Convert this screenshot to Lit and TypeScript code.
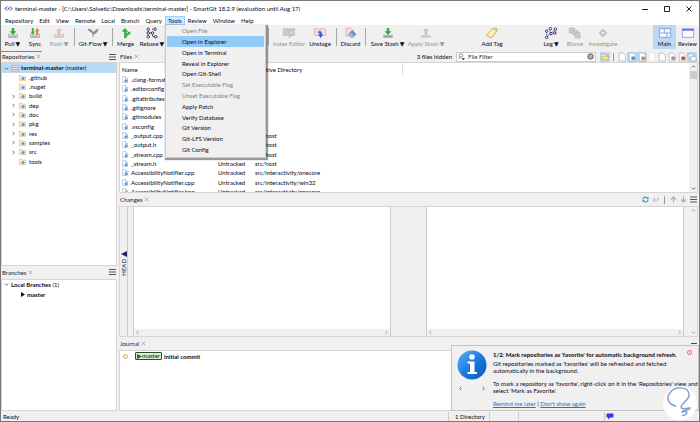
import { LitElement, html, css, svg, nothing } from "lit";
import { customElement } from "lit/decorators.js";

const chevron = (d: string) => html`<svg class="chev" viewBox="0 0 6 6"><path d=${d} /></svg>`;
const UP = "M1 4 L3 2 L5 4";
const DOWN = "M1 2 L3 4 L5 2";
const LEFT = "M4 1 L2 3 L4 5";
const RIGHT = "M2 1 L4 3 L2 5";

const tray = (c: string) => svg`<path d="M1 9v6h14V9" fill="#dcdcdc" stroke=${c} stroke-width="1.2"/><path d="M3 13h10" stroke=${c} stroke-width="1.2"/>`;
const downArrow = svg`<path d="M6 0h4v5h3.500L8 11 2.500 5H6z" fill="#2fae3c"/>`;
const upArrow = (c: string) => svg`<path d="M6 11h4V5h3L8 0 3 5h3z" fill=${c}/>`;

const toolIcons: Record<string, unknown> = {
  pull: svg`${tray("#9a9a9a")}${downArrow}`,
  sync: svg`${tray("#9a9a9a")}<path d="M3 0h3v6h2L4.500 11 1 6h2z" fill="#3bb143"/><path d="M10 11h3V5h2L11.500 0 8 5h2z" fill="#e07b39"/>`,
  push: svg`${tray("#bdbdbd")}${upArrow("#d8bfb3")}`,
  flow: svg`<path d="M8 15V9M8 9C7 7 4 7 0 2c5 0 8 2 8 7zM8 10c1-4 3-6 8-8-1 5-4 7-8 8z" fill="#8d9a91" stroke="#68756d" stroke-width="1"/>`,
  merge: svg`<path d="M6 0l6 6H9v3l3-3h3v3l-6 4v3H5V6H1z" fill="#35b24a"/>`,
  rebase: svg`<g fill="#fff" stroke="#26264f" stroke-width="1.500"><path d="M2 2v12M2 8h7M8 2h5M9 8v6h5" fill="none" stroke-dasharray="2 1"/><circle cx="2" cy="2" r="2"/><circle cx="2" cy="8" r="2"/><circle cx="2" cy="14" r="2"/><circle cx="13" cy="2" r="2"/><circle cx="9" cy="8" r="2"/><circle cx="14" cy="14" r="2"/></g>`,
  index: svg`<path d="M-1 1h7l2 1 2-1h7v11H-1z" fill="#d4d4d4" stroke="#b0b0b0"/><path d="M1 4h5M1 8h4M10 4h5M8 2v9" stroke="#a4a4a4"/><path d="M7 15l6-7 2 1-6 7z" fill="#bcbcbc"/>`,
  unstage: svg`<path d="M-1 1h6l2 2v9h-8z" fill="#f8dcd6" stroke="#c9a49d"/><path d="M9 1h6l2 2v9H9z" fill="#f8dcd6" stroke="#c9a49d"/><path d="M5 6c3-2 6 0 6 4h2l-4 6-4-6h3c0-2-1-2-3-2z" fill="#3558e0"/>`,
  discard: svg`<path d="M0 0h8l4 4v9H0z" fill="#f7dcda" stroke="#cfa3a0"/><path d="M4 10l6-6 6 6-6 6z" fill="#6f90cb" stroke="#4d6da8"/><path d="M4 10l3-3 6 6-3 3z" fill="#a4bae2"/>`,
  save: svg`<path d="M0 11h16v5H0z" fill="#b9b9b9"/><path d="M2 13.500h12" stroke="#888"/>${downArrow}`,
  apply: svg`<path d="M0 11h16v5H0z" fill="#d6d6d6"/><path d="M2 13.500h12" stroke="#bbb"/><path d="M6 12h4V5h3L8 0 3 5h3z" fill="#d6c0ac"/>`,
  tag: svg`<path d="M-1 12L8 1l7-1 1 5-9 11z" fill="#fdeeb0" stroke="#b59c57" stroke-width="1.200"/><circle cx="13" cy="3.500" r="1.100" fill="#fff" stroke="#8a7742" stroke-width=".6"/>`,
  log: svg`<g fill="#fff" stroke="#26264f" stroke-width="1.500"><path d="M1 4v10M1 14l6-5 7-6M6 1l1 8" fill="none" stroke="#3a46e0" stroke-dasharray="2 1"/><circle cx="1" cy="5" r="2"/><circle cx="1" cy="15" r="2"/><circle cx="7" cy="1" r="2"/><circle cx="8" cy="9" r="2"/><circle cx="15" cy="2" r="2"/><circle cx="14" cy="8" r="2"/></g>`,
  blame: svg`<g fill="#cccccc" stroke="#b0b0b0"><path d="M-1 0h8v8h-8z"/><path d="M4 4h8v7H4z"/><path d="M8 7h8v9H8z"/></g>`,
  investigate: svg`<path d="M8 2l6 6-6 6-6-6z" fill="#c0c0c0" stroke="#a4a4a4"/><path d="M8 5l3 3-3 3-3-3z" fill="#eee"/>`,
  main: svg`<g fill="#f6faff" stroke="#7d92dd" stroke-width="1.300"><path d="M-1 1h18v14H-1zM-1 8h18M7 1v7M11 8v7"/></g>`,
  review: svg`<path d="M-1 1h18v14H-1z" fill="#fafbff" stroke="#8f99df" stroke-width="1.300"/><path d="M-1 3h18" stroke="#5966d4" stroke-width="2.500"/>`,
};

interface Tool { icon: string; label: string; menu?: boolean; off?: boolean; active?: boolean }
const tools: (Tool | "sep" | "gap")[] = [
  { icon: "pull", label: "Pull", menu: true },
  { icon: "sync", label: "Sync" },
  { icon: "push", label: "Push", menu: true, off: true },
  "sep",
  { icon: "flow", label: "Git-Flow", menu: true },
  "sep",
  { icon: "merge", label: "Merge" },
  { icon: "rebase", label: "Rebase", menu: true },
  "gap",
  "sep",
  { icon: "index", label: "Index Editor", off: true },
  { icon: "unstage", label: "Unstage" },
  "sep",
  { icon: "discard", label: "Discard" },
  "sep",
  { icon: "save", label: "Save Stash", menu: true },
  { icon: "apply", label: "Apply Stash", menu: true, off: true },
  "gap",
  { icon: "tag", label: "Add Tag" },
  "gap",
  { icon: "log", label: "Log", menu: true },
  { icon: "blame", label: "Blame", off: true },
  { icon: "investigate", label: "Investigate", off: true },
  "gap",
  { icon: "main", label: "Main", active: true },
  { icon: "review", label: "Review" },
];

const menus = ["Repository", "Edit", "View", "Remote", "Local", "Branch", "Query", "Tools", "Review", "Window", "Help"];

const toolsMenu: [string, boolean][] = [
  ["Open File", false],
  ["Open in Explorer", true],
  ["Open in Terminal", true],
  ["Reveal in Explorer", true],
  ["Open Git-Shell", true],
  ["Set Executable Flag", false],
  ["Unset Executable Flag", false],
  ["Apply Patch", true],
  ["Verify Database", true],
  ["Git Version", true],
  ["Git-LFS Version", true],
  ["Git Config", true],
];

const folders: [string, boolean][] = [
  [".github", false], [".nuget", false], ["build", true], ["dep", true], ["doc", true],
  ["pkg", true], ["res", true], ["samples", true], ["src", true], ["tools", false],
];

const files: [string, string][] = [
  [".clang-format", ""],
  [".editorconfig", ""],
  [".gitattributes", ""],
  [".gitignore", ""],
  [".gitmodules", ""],
  [".vsconfig", ""],
  ["_output.cpp", "src/host"],
  ["_output.h", "src/host"],
  ["_stream.cpp", "src/host"],
  ["_stream.h", "src/host"],
  ["AccessibilityNotifier.cpp", "src/interactivity/onecore"],
  ["AccessibilityNotifier.cpp", "src/interactivity/win32"],
  ["AccessibilityNotifier.hpp", "src/interactivity/onecore"],
];

const fileIcon = html`<svg class="ficon" viewBox="0 0 12 14"><path d="M1 1h6l4 4v8H1z" fill="#fff" stroke="#8fa3b8"/><path d="M7 1v4h4" fill="none" stroke="#8fa3b8"/><circle cx="8" cy="9.500" r="3.200" fill="#5b9be6"/></svg>`;
const folderIcon = html`<svg class="dicon" viewBox="0 0 14 12"><path d="M1 11.500V.5h5l1.500 2H13v9z" fill="#fdebd0" stroke="#e2a95f"/><circle cx="8" cy="7" r="3.200" fill="#5b9be6"/></svg>`;
const repoIcon = html`<svg class="ricon" viewBox="0 0 16 14"><path d="M1 1h14v12H1z" fill="#f4dede" stroke="#b98f98"/><path d="M1 5h14M1 9h14" stroke="#b98f98" stroke-width="1.500"/></svg>`;
const burger = html`<svg class="burger" viewBox="0 0 7 6"><path d="M0 0h7v1H0zM0 2.500h7v1H0zM0 5h7v1H0z" fill="#555"/></svg>`;

const filters: [string, string, boolean][] = [
  ["Unchanged", "", false],
  ["Untracked", "#4d94ec", true],
  ["Ignored", "#d28b4b", true],
  ["Assume unchanged", "faint", false],
  ["Directories", "", false],
  ["Renamed", "#999999", false],
  ["Conflicting", "#c8522e", false],
  ["Subdirectories", "stack", true],
];

const filterIcon = (kind: string) =>
  kind === "stack"
    ? svg`<path d="M0 1h8l2 2v6H0z" fill="#e8eef5" stroke="#8b9db0"/><path d="M5 6h7l2 2v6H5z" fill="#fff" stroke="#8b9db0"/>`
    : svg`<path d="M2 0h7l4 4v10H2z" fill="#fff" stroke=${kind === "faint" ? "#dcdcdc" : "#90a0b2"}/>${kind.startsWith("#") ? svg`<circle cx="9" cy="9" r="3.500" fill=${kind}/>` : nothing}`;

@customElement("app-root")
export class AppRoot extends LitElement {
  static styles = css`
    :host { display: block; }
    * { box-sizing: border-box; }
    button, input { font: inherit; color: inherit; margin: 0; padding: 0; border: 0; background: none; }
    svg { display: block; flex: none; overflow: visible; }
    .window {
      display: flex; flex-direction: column; height: 100vh; overflow: hidden; position: relative;
      background: #f0f0f0; color: #08081a; border: 1px solid #777;
      font: 6px/9px Lato, "Open Sans", sans-serif; white-space: nowrap;
    }
    .window * { font-variant-ligatures: none; }
    .title { display: flex; align-items: center; height: 15px; flex: none; background: #fff; padding-left: 4px; gap: 3px; }
    .title h1 { flex: 1; font: inherit; margin: 0; }
    .winbtn { width: 19px; height: 14px; display: grid; place-items: center; }
    .winbtn svg { width: 6px; height: 6px; fill: none; stroke: #222; stroke-width: 1; }
    .title .winbtn:last-child { width: 20px; }
    .logo { width: 7px; height: 7px; }
    .menubar { display: flex; background: #fff; height: 9px; flex: none; padding-left: 1px; }
    .menubar button { padding: 0 3px; line-height: 9px; }
    .menubar .open { background: #cce8ff; outline: 1px solid #99d1ff; outline-offset: -1px; }
    .menuwrap { position: relative; }
    .menu {
      position: absolute; z-index: 5; left: 0; top: 9px; width: 101px; padding: 0 1px 2px;
      display: flex; flex-direction: column; background: #f0f0f0; border: 1px solid #ccc; border-top-width: 0; box-shadow: 1px 1px 1px 1px #0006;
    }
    .menubar .menu button { height: 11px; line-height: 11px; padding-left: 15px; text-align: left; }
    .menubar .menu button:nth-child(5n) { height: 10px; line-height: 10px; }
    .menubar .menu button:disabled { color: #848484; }
    .menubar .menu .hot { background: #91c9f7; }
    .tools {
      display: grid; height: 25px; flex: none;
      grid-template-columns: 23px 22px 26px 4px 34px 5px 21px 32px 97px 6px 36px 26px 7px 21px 8px 37px 40px 1fr 26px 1fr 26px 22px 34px 1fr 23px 23px;
    }
    .tool { display: flex; flex-direction: column; align-items: center; justify-content: flex-start; padding-top: 3px; gap: 1px; line-height: 9px; }
    .tool svg { width: 10px; height: 10px; }
    .tool span { display: flex; gap: 1px; }
    .tool i { font: 6px/9px "DejaVu Sans", sans-serif; }
    .tool:disabled { color: #949494; }
    .tool.active { background: #b9d9f2; height: 24px; }
    .vsep { width: 1px; height: 18px; margin-top: 3px; background: #a8a8a8; justify-self: center; }
    .body { flex: 1; min-height: 0; display: grid; grid-template-columns: 116px 1fr; gap: 2px; padding: 1px 1px 0 0; }
    .col { display: flex; flex-direction: column; min-width: 0; min-height: 0; }
    .head { position: relative; display: flex; align-items: center; height: 13px; flex: none; padding: 0 1px; }
    .head h2 { font: inherit; margin: 0; color: #22222d; }
    .close { width: 6px; display: grid; place-items: center; }
    .tab { flex: 1; display: flex; gap: 1px; }
    .head.first { height: 11px; }
    .focus::before { content: ""; position: absolute; left: 0; top: 0; width: 41px; height: 1px; background: #4a90d9; }
    .burger { width: 7px; height: 6px; }
    .box { background: #fff; border: 1px solid #d5d5d5; min-height: 0; overflow: hidden; flex-basis: 0; }
    .g204 { flex-grow: 204; }
    .g132 { flex-grow: 132; }
    .g60 { flex-grow: 60; }
    ul { list-style: none; margin: 0; padding: 0; }
    li { height: 9px; line-height: 9px; display: flex; align-items: center; gap: 3px; padding-left: 9px; }
    li:nth-child(3n + 1) { height: 10px; line-height: 10px; }
    .top { padding-left: 2px; gap: 2px; }
    .sel { background: #b8dcf5; }
    .ricon { width: 8px; height: 7px; }
    .twist { width: 5px; height: 6px; display: grid; place-items: center; }
    .chev { width: 5px; height: 5px; fill: none; stroke: #555; stroke-width: 1; }
    .dicon { width: 7px; height: 6px; }
    .ficon { width: 6px; height: 7px; }
    .branch { padding-left: 18px; font-weight: 700; gap: 2px; }
    .play { width: 5px; height: 5px; }
    .search { display: flex; align-items: center; width: 140px; height: 10px; background: #fff; border: 1px solid #ccc; padding: 0 1px; gap: 3px; margin: 0 4px; }
    .search input { flex: 1; min-width: 0; height: 8px; line-height: 8px; outline: 0; }
    .search input::placeholder { color: #333; opacity: 1; }
    .mag, .clear { width: 7px; height: 7px; }
    .filters { display: flex; align-items: center; }
    .filters button { width: 10px; height: 10px; display: grid; place-items: center; }
    .filters button svg { width: 8px; height: 8px; }
    .filters .on { background: #b9d9f2; }
    .bar { width: 1px; height: 8px; background: #999; margin: 0 3px; }
    .scrollpane { display: flex; }
    .grow { flex: 1; min-width: 0; overflow: hidden; }
    .vscroll { width: 8px; background: #f0f0f0; display: flex; flex-direction: column; justify-content: space-between; align-items: center; padding: 1px 0; }
    .thumb { width: 7px; height: 8px; background: #cdcdcd; margin-bottom: auto; margin-top: 2px; }
    table { border-collapse: collapse; table-layout: fixed; width: 100%; }
    td, th { padding: 0; font-weight: 400; text-align: left; overflow: hidden; }
    th { height: 12px; padding-left: 2px; }
    th:nth-child(3) { border-right: 1px solid #ddd; }
    th:nth-child(2), td:nth-child(2), th:nth-child(3), td:nth-child(3) { padding-left: 1px; }
    .cn { width: 97px; }
    .cs { width: 37px; }
    .cd { width: 148px; }
    tbody tr { height: 9px; }
    tbody tr:nth-child(3n) { height: 10px; }
    .name { display: flex; align-items: center; gap: 3px; padding-left: 2px; height: 9px; line-height: 9px; }
    .ops { display: flex; align-items: center; gap: 3px; }
    .ops svg { width: 7px; height: 7px; }
    .ops .bar { margin: 0 2px; }
    .diff { display: grid; grid-template-columns: 8px 5px 1fr 35px 1fr 5px 8px; background: #f0f0f0; }
    .side { display: flex; flex-direction: column; align-items: center; border-right: 1px solid #ccc; padding-top: 44px; gap: 2px; }
    .side span { writing-mode: vertical-rl; transform: rotate(180deg); line-height: 7px; }
    .side svg { width: 6px; height: 6px; }
    .pane { background: #fff; border: solid #ccc; border-width: 0 1px; display: flex; flex-direction: column; justify-content: flex-end; min-width: 0; }
    .hscroll { height: 7px; background: #f0f0f0; display: flex; justify-content: space-between; align-items: center; padding: 0 1px; }
    .dim .chev, .chev.dim { stroke: #999; }
    .commit { display: flex; align-items: center; height: 10px; padding: 0 3px; gap: 7px; }
    .commit svg { width: 5px; height: 5px; }
    .msg { display: flex; gap: 2px; align-items: center; }
    .ref { display: flex; align-items: center; height: 8px; line-height: 6px; padding: 0 1px; border: 1px solid #2e4d2e; border-radius: 1px; background: #d6f5cc; }
    .status { display: flex; align-items: center; height: 10px; flex: none; }
    .status span { padding-left: 2px; flex: 1; }
    .cell { height: 9px; border-left: 1px solid #ccc; display: flex; align-items: center; padding-left: 6px; }
    .c1 { width: 41px; }
    .c2 { width: 29px; }
    .c3 { width: 86px; }
    .c4 { width: 95px; padding-left: 1px; }
    .cell svg { width: 8px; height: 7px; }
    .toast {
      position: absolute; z-index: 4; right: 0; bottom: 10px; width: 248px; height: 66px; padding: 4px 5px;
      display: grid; grid-template-columns: 30px 1fr 6px; column-gap: 6px; background: #f0f0f0; border: 1px solid #c4c4c4;
    }
    .info { width: 30px; height: 30px; }
    .pager { display: flex; justify-content: space-between; padding: 6px 1px; }
    .note { min-width: 0; line-height: 7px; }
    .note h3 { font-size: 6px; line-height: 9px; margin: 0 0 1px; }
    .note p { margin: 0 0 6px; }
    .note a { color: #2472c8; }
    .x { width: 5px; height: 5px; }
    .bulb { position: absolute; z-index: 6; right: 2px; bottom: 1px; width: 34px; height: 34px; }
    .min { position: absolute; z-index: 6; right: 2px; bottom: 77px; width: 6px; height: 1px; background: #444; }
  `;

  private head(title: string, extra: unknown = nothing, cls = "") {
    return html`<header class="head ${cls}"><div class="tab"><h2>${title}</h2><button class="close" aria-label="Close ${title}"><svg viewBox="0 0 6 6" class="chev dim"><path d="M1 1l4 4M5 1l-4 4"/></svg></button></div>${extra}</header>`;
  }

  private tool(t: Tool | "sep" | "gap") {
    if (t === "gap") return html`<div></div>`;
    if (t === "sep") return html`<div class="vsep"></div>`;
    return html`<button class="tool ${t.active ? "active" : ""}" ?disabled=${t.off}>
      <svg viewBox="0 0 16 16">${toolIcons[t.icon]}</svg><span>${t.label}${t.menu ? html`<i>▼</i>` : nothing}</span>
    </button>`;
  }

  render() {
    return html`<div class="window">
      <header class="title">
        <svg class="logo" viewBox="0 0 14 14"><path d="M4 3L0 7l4 4M10 3l4 4-4 4" fill="none" stroke="#2b2b7a" stroke-width="2"/><circle cx="7" cy="7" r="2" fill="#3b55c4"/></svg>
        <h1>terminal-master - [C:\\Users\\Solvetic\\Downloads\\terminal-master] - SmartGit 18.2.9 (evaluation until Aug 17)</h1>
        <button class="winbtn" aria-label="Minimize"><svg viewBox="0 0 6 6"><path d="M0 3.500h6"/></svg></button>
        <button class="winbtn" aria-label="Maximize"><svg viewBox="0 0 6 6"><path d="M.5.5h5v5h-5z"/></svg></button>
        <button class="winbtn" aria-label="Close"><svg viewBox="0 0 6 6"><path d="M.5.5l5 5M5.500.5l-5 5"/></svg></button>
      </header>
      <nav class="menubar">
        ${menus.map((m) => m === "Tools"
          ? html`<div class="menuwrap"><button class="open">${m}</button><div class="menu">
              ${toolsMenu.map(([label, on]) => html`<button class=${label === "Open in Explorer" ? "hot" : ""} ?disabled=${!on}>${label}</button>`)}
            </div></div>`
          : html`<button>${m}</button>`)}
      </nav>
      <div class="tools">${tools.map((t) => this.tool(t))}</div>
      <main class="body">
        <section class="col">
          ${this.head("Repositories", burger, "first focus")}
          <div class="box g204">
            <ul>
              <li class="top sel">${chevron(DOWN)}${repoIcon}<span><b>terminal-master</b> (master)</span></li>
              ${folders.map(([n, open]) => html`<li><span class="twist">${open ? chevron(RIGHT) : nothing}</span>${folderIcon}<span>${n}</span></li>`)}
            </ul>
          </div>
          ${this.head("Branches", burger)}
          <div class="box g132">
            <ul><li class="top">${chevron(DOWN)}<span><b>Local Branches</b> (1)</span></li>
            <li class="branch"><svg class="play" viewBox="0 0 5 5"><path d="M1 0l4 2.500-4 2.500z" fill="#101030"/></svg>master</li></ul>
          </div>
        </section>
        <section class="col">
          ${this.head("Files", html`
            <span>3 files hidden</span>
            <label class="search"><svg class="mag" viewBox="0 0 14 14"><circle cx="6" cy="5" r="3.500" fill="#fff" stroke="#555" stroke-width="1.300"/><path d="M4 8l-3 4M8 11h5l-2.500 3z" stroke="#334" fill="#334"/></svg><input placeholder="File Filter" aria-label="File Filter"><svg class="clear" viewBox="0 0 14 14"><circle cx="7" cy="7" r="6.500" fill="#888"/><path d="M4.500 4.500l5 5M9.500 4.500l-5 5" stroke="#fff" stroke-width="1.500"/></svg></label>
            <div class="filters"><button class="on" aria-label="Show folders"><svg viewBox="0 0 14 14"><path d="M1 12V2h5l1 2h5v3" fill="#fff3c9" stroke="#d39c48"/><path d="M1 12l3-6h10l-2 6z" fill="#fde3a0" stroke="#d39c48"/></svg></button><span class="bar"></span>
            ${filters.map(([n, k, on]) => html`<button class=${on ? "on" : ""} aria-label=${n}><svg viewBox="0 0 14 14">${filterIcon(k)}</svg></button>`)}</div>`, "first")}
          <div class="box g132 scrollpane">
            <div class="grow"><table>
              <colgroup><col class="cn"><col class="cs"><col class="cd"><col></colgroup>
              <thead><tr><th>Name</th><th>State</th><th>Relative Directory</th><th></th></tr></thead>
              <tbody>${files.map(([n, d]) => html`<tr><td><div class="name">${fileIcon}${n}</div></td><td>Untracked</td><td>${d}</td><td></td></tr>`)}</tbody>
            </table></div>
            <div class="vscroll">${chevron(UP)}<div class="thumb"></div>${chevron(DOWN)}</div>
          </div>
          ${this.head("Changes", html`<div class="ops">
            <svg viewBox="0 0 14 14"><path d="M2 7a5 5 0 0 1 9-3M12 7a5 5 0 0 1-9 3" fill="none" stroke="#3d9bc9" stroke-width="2.200"/><path d="M13 1v5H8zM1 13V8h5z" fill="#3d9bc9"/></svg>
            <svg viewBox="0 0 14 14"><path d="M12 3v5H3M6 4L2 8l4 4" fill="none" stroke="#b4b8bd" stroke-width="2"/></svg>
            <span class="bar"></span>
            <svg viewBox="0 0 14 14"><path d="M7 13V3M2 7l5-5 5 5" fill="none" stroke="#a9b0b8" stroke-width="2.500"/></svg>
            <svg viewBox="0 0 14 14"><path d="M7 1v10M2 7l5 5 5-5" fill="none" stroke="#a9b0b8" stroke-width="2.500"/></svg>
            ${burger}</div>`)}
          <div class="box g132 diff dim">
            <div class="side"><svg viewBox="0 0 6 6"><path d="M6 0v6L0 3z" fill="#1f2560"/></svg><span>HEAD</span></div>
            <div></div>
            <div class="pane"><div class="hscroll">${chevron(LEFT)}${chevron(RIGHT)}</div></div>
            <div></div>
            <div class="pane"><div class="hscroll">${chevron(LEFT)}${chevron(RIGHT)}</div></div>
            <div></div>
            <div class="vscroll">${chevron(UP)}${chevron(DOWN)}</div>
          </div>
          ${this.head("Journal")}
          <div class="box g60"><div class="commit">
            <svg viewBox="0 0 10 10"><circle cx="5" cy="5" r="3.800" fill="#fff8ee" stroke="#e0913d" stroke-width="1.800"/></svg>
            <div class="msg"><span class="ref"><svg viewBox="0 0 5 5"><path d="M0 0l5 2.500L0 5z" fill="#1d6b2a"/></svg>master</span><b>initial commit</b></div>
          </div></div>
        </section>
      </main>
      <footer class="status"><span>Ready</span><div class="cell c1">1 Directory</div><div class="cell c2"></div><div class="cell c3"></div>
        <div class="cell c4"><svg viewBox="0 0 16 14"><path d="M3 1h10q2 0 2 2v4q0 2-2 2H8l-4 4V9H3Q1 9 1 7V3q0-2 2-2z" fill="#3333e0"/></svg></div></footer>
      <div class="min"></div>
      <aside class="toast">
        <div><svg class="info" viewBox="0 0 60 60"><defs><linearGradient id="ig" x1="0" y1="0" x2="1" y2="1"><stop offset="0" stop-color="#5eb1f5"/><stop offset=".5" stop-color="#1a7be0"/><stop offset="1" stop-color="#0a56b8"/></linearGradient></defs><circle cx="30" cy="30" r="29" fill="url(#ig)"/><circle cx="30" cy="14" r="5.500" fill="#fff"/><path d="M21 23h14v21h5v4H21v-4h5V27h-5z" fill="#fff"/></svg>
        <div class="pager">${chevron(LEFT)}${chevron(RIGHT)}</div></div>
        <div class="note"><h3>1/2: Mark repositories as 'favorite' for automatic background refresh.</h3>
        <p>Git repositories marked as 'favorites' will be refreshed and fetched<br>automatically in the background.</p>
        <p>To mark a repository as 'favorite', right-click on it in the 'Repositories' view and<br>select 'Mark as Favorite'.</p>
        <div><a href="#">Remind me later</a> | <a href="#">Don't show again</a></div></div>
        <svg class="x" viewBox="0 0 10 10"><circle cx="5" cy="5" r="4" fill="#fff" stroke="#df4b3c" stroke-width="1.800"/><path d="M3.500 3.500l3 3M6.500 3.500l-3 3" stroke="#df4b3c"/></svg>
      </aside>
      <svg class="bulb" viewBox="0 0 34 34"><circle cx="17" cy="17" r="17" fill="#fff"/><path d="M13 20C5 19 3 11 7 7 11 0 25 0 26 8c1 6-7 8-8 13 0 3 4 1 9 1-1 3-8 2-8 4 3 0 5-1 5 1-1 2-3 3-5 2" fill="none" stroke="#86a2cf" stroke-width="1.500"/></svg>
    </div>`;
  }
}
